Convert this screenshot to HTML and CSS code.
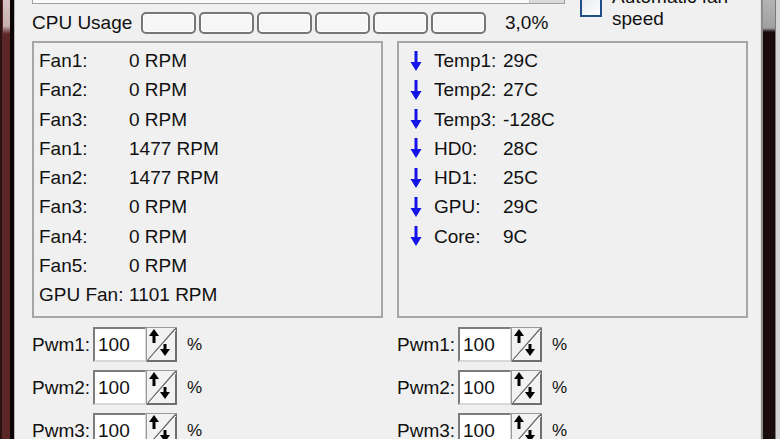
FILE: index.html
```html
<!DOCTYPE html>
<html lang="en">
<head>
  <meta charset="UTF-8" />
  <title>SpeedFan</title>
  <link rel="stylesheet" href="styles.css">
</head>
<body>
<div class="frame">
  <div class="edge-left"></div>
  <div class="window">
    <div class="header">
      <div class="header-main">
        <div class="top-strip"><div class="top-field"></div><div class="top-btn"></div></div>
        <div class="cpu-row">
          <span class="cpu-label">CPU Usage</span>
          <div class="cpu-bars">
            <div class="cpu-bar"></div>
            <div class="cpu-bar"></div>
            <div class="cpu-bar"></div>
            <div class="cpu-bar"></div>
            <div class="cpu-bar"></div>
            <div class="cpu-bar"></div>
          </div>
          <span class="cpu-value">3,0%</span>
        </div>
      </div>
      <div class="auto-speed">
        <div class="checkbox"></div>
        <div class="auto-label">Automatic fan speed</div>
      </div>
    </div>

    <div class="panels">
      <div class="panel fans">
        <div class="row"><span class="name">Fan1:</span><span>0 RPM</span></div>
        <div class="row"><span class="name">Fan2:</span><span>0 RPM</span></div>
        <div class="row"><span class="name">Fan3:</span><span>0 RPM</span></div>
        <div class="row"><span class="name">Fan1:</span><span>1477 RPM</span></div>
        <div class="row"><span class="name">Fan2:</span><span>1477 RPM</span></div>
        <div class="row"><span class="name">Fan3:</span><span>0 RPM</span></div>
        <div class="row"><span class="name">Fan4:</span><span>0 RPM</span></div>
        <div class="row"><span class="name">Fan5:</span><span>0 RPM</span></div>
        <div class="row"><span class="name">GPU Fan:</span><span>1101 RPM</span></div>
      </div>
      <div class="panel temps">
        <div class="row"><svg class="arrow" viewBox="0 0 12 20"><path d="M4.5 0h3v11h4l-5.5 9L0.5 11h4z"/></svg><span class="name">Temp1:</span><span>29C</span></div>
        <div class="row"><svg class="arrow" viewBox="0 0 12 20"><path d="M4.5 0h3v11h4l-5.5 9L0.5 11h4z"/></svg><span class="name">Temp2:</span><span>27C</span></div>
        <div class="row"><svg class="arrow" viewBox="0 0 12 20"><path d="M4.5 0h3v11h4l-5.5 9L0.5 11h4z"/></svg><span class="name">Temp3:</span><span>-128C</span></div>
        <div class="row"><svg class="arrow" viewBox="0 0 12 20"><path d="M4.5 0h3v11h4l-5.5 9L0.5 11h4z"/></svg><span class="name">HD0:</span><span>28C</span></div>
        <div class="row"><svg class="arrow" viewBox="0 0 12 20"><path d="M4.5 0h3v11h4l-5.5 9L0.5 11h4z"/></svg><span class="name">HD1:</span><span>25C</span></div>
        <div class="row"><svg class="arrow" viewBox="0 0 12 20"><path d="M4.5 0h3v11h4l-5.5 9L0.5 11h4z"/></svg><span class="name">GPU:</span><span>29C</span></div>
        <div class="row"><svg class="arrow" viewBox="0 0 12 20"><path d="M4.5 0h3v11h4l-5.5 9L0.5 11h4z"/></svg><span class="name">Core:</span><span>9C</span></div>
      </div>
    </div>

    <div class="pwm-grid">
      <div class="pwm-col">
        <div class="pwm-row"><span class="pwm-label">Pwm1:</span><div class="field">100</div><svg class="spin" viewBox="0 0 31 35"><rect x="0.5" y="0.5" width="30" height="34" fill="#f2f2f2" stroke="#9a9a9a"/><path d="M30 1v33H1" fill="none" stroke="#6e6e6e" stroke-width="2"/><path d="M2 33L29 2" stroke="#6e6e6e" stroke-width="1.5"/><path d="M3 33L30 3" stroke="#fff"/><path d="M8 2l5 7h-3.5v7h-3v-7H3z"/><path d="M19 29l5 -7h-3.5v-5h-3v5H14z"/></svg><span class="pct">%</span></div>
        <div class="pwm-row"><span class="pwm-label">Pwm2:</span><div class="field">100</div><svg class="spin" viewBox="0 0 31 35"><rect x="0.5" y="0.5" width="30" height="34" fill="#f2f2f2" stroke="#9a9a9a"/><path d="M30 1v33H1" fill="none" stroke="#6e6e6e" stroke-width="2"/><path d="M2 33L29 2" stroke="#6e6e6e" stroke-width="1.5"/><path d="M3 33L30 3" stroke="#fff"/><path d="M8 2l5 7h-3.5v7h-3v-7H3z"/><path d="M19 29l5 -7h-3.5v-5h-3v5H14z"/></svg><span class="pct">%</span></div>
        <div class="pwm-row"><span class="pwm-label">Pwm3:</span><div class="field">100</div><svg class="spin" viewBox="0 0 31 35"><rect x="0.5" y="0.5" width="30" height="34" fill="#f2f2f2" stroke="#9a9a9a"/><path d="M30 1v33H1" fill="none" stroke="#6e6e6e" stroke-width="2"/><path d="M2 33L29 2" stroke="#6e6e6e" stroke-width="1.5"/><path d="M3 33L30 3" stroke="#fff"/><path d="M8 2l5 7h-3.5v7h-3v-7H3z"/><path d="M19 29l5 -7h-3.5v-5h-3v5H14z"/></svg><span class="pct">%</span></div>
      </div>
      <div class="pwm-col">
        <div class="pwm-row"><span class="pwm-label">Pwm1:</span><div class="field">100</div><svg class="spin" viewBox="0 0 31 35"><rect x="0.5" y="0.5" width="30" height="34" fill="#f2f2f2" stroke="#9a9a9a"/><path d="M30 1v33H1" fill="none" stroke="#6e6e6e" stroke-width="2"/><path d="M2 33L29 2" stroke="#6e6e6e" stroke-width="1.5"/><path d="M3 33L30 3" stroke="#fff"/><path d="M8 2l5 7h-3.5v7h-3v-7H3z"/><path d="M19 29l5 -7h-3.5v-5h-3v5H14z"/></svg><span class="pct">%</span></div>
        <div class="pwm-row"><span class="pwm-label">Pwm2:</span><div class="field">100</div><svg class="spin" viewBox="0 0 31 35"><rect x="0.5" y="0.5" width="30" height="34" fill="#f2f2f2" stroke="#9a9a9a"/><path d="M30 1v33H1" fill="none" stroke="#6e6e6e" stroke-width="2"/><path d="M2 33L29 2" stroke="#6e6e6e" stroke-width="1.5"/><path d="M3 33L30 3" stroke="#fff"/><path d="M8 2l5 7h-3.5v7h-3v-7H3z"/><path d="M19 29l5 -7h-3.5v-5h-3v5H14z"/></svg><span class="pct">%</span></div>
        <div class="pwm-row"><span class="pwm-label">Pwm3:</span><div class="field">100</div><svg class="spin" viewBox="0 0 31 35"><rect x="0.5" y="0.5" width="30" height="34" fill="#f2f2f2" stroke="#9a9a9a"/><path d="M30 1v33H1" fill="none" stroke="#6e6e6e" stroke-width="2"/><path d="M2 33L29 2" stroke="#6e6e6e" stroke-width="1.5"/><path d="M3 33L30 3" stroke="#fff"/><path d="M8 2l5 7h-3.5v7h-3v-7H3z"/><path d="M19 29l5 -7h-3.5v-5h-3v5H14z"/></svg><span class="pct">%</span></div>
      </div>
    </div>
  </div>
  <div class="edge-right"></div>
</div>
</body>
</html>
```

FILE: styles.css
```css
body { margin:0; font-family:"Liberation Sans", Arial, sans-serif; font-size:19px; color:#111; background:#f0f0f0; overflow:hidden;}
.frame { display:flex; height:439px; overflow:hidden;}

.edge-left { width:16px; flex:none;
  background:
    linear-gradient(to bottom, #d6c4c4 0, #c8b0b0 26px, transparent 34px) 3px 0 / 7px 100% no-repeat,
    linear-gradient(to right, #2a1212 0 2px, #5a2626 2px 10px, #0a0404 10px 14px, #b8b8b8 14px 15px, #f0f0f0 15px);}
.edge-right { width:20px; flex:none;
  background:
    linear-gradient(to bottom, #b4b4b4 0, #a0a0a0 28px, #1a0c0c 32px) 3px 0 / 12px 100% no-repeat,
    linear-gradient(to right, #e4e4e4 0 1px, #8c8c8c 1px 3px, #120808 3px 15px, #7a7a7a 15px 16px, #d4d4d4 16px);}

.window { flex:1; padding:0 12px 0 16px; background:#f0f0f0;}

.header { display:flex; align-items:flex-start; height:34px;}
.header-main { width:533px; flex:none;}
.top-strip { display:flex; height:3px; border:1px solid #a0a0a0; border-top:none;}
.top-field { flex:1; background:#fbfbfb;}
.top-btn { width:34px; background:#dadada; border-left:1px solid #c4c4c4;}

.cpu-row { display:flex; align-items:center; height:22px; margin-top:8px;}
.cpu-label { width:109px; flex:none;}
.cpu-bars { display:flex; gap:3px;}
.cpu-bar { width:55px; height:22px; box-sizing:border-box; border:2px solid #767676; border-radius:5px; background:#f6f6f6; box-shadow:inset 0 0 0 1px #fff;}
.cpu-value { margin-left:19px;}

.auto-speed { display:flex; align-items:flex-start; margin-left:15px;}
.checkbox { width:22px; height:22px; box-sizing:border-box; margin-top:-5px; border:2px solid #1f4f86; background:linear-gradient(135deg, #e4e8ee, #ffffff);}
.auto-label { width:125px; margin-left:10px; margin-top:-14px; line-height:22px;}

.panels { display:grid; grid-template-columns:351px 351px; gap:14px; margin-top:7px; height:277px;}
.panel { box-sizing:border-box; border:2px solid #a6a6a6; background:#f0f0f0; padding-top:3px; line-height:29.25px;}
.row { display:flex; align-items:center; height:29.25px;}
.fans { padding-left:5px;}
.fans .name { width:90px;}
.temps { padding-left:11px;}
.arrow { width:12px; height:20px; fill:#1414e6; margin-right:12px; flex:none;}
.temps .name { width:69px;}

.pwm-grid { display:grid; grid-template-columns:351px 351px; gap:14px; margin-top:9px;}
.pwm-col { display:flex; flex-direction:column; gap:8px;}
.pwm-row { display:flex; align-items:center; height:35px;}
.pwm-label { width:61px; flex:none;}
.field { width:53px; height:35px; box-sizing:border-box; padding-left:3px; line-height:31px; background:#fff;
  border-top:2px solid #7c7c7c; border-left:2px solid #7c7c7c; border-bottom:2px solid #d8d8d8; border-right:1px solid #d8d8d8;}
.spin { width:31px; height:35px; flex:none;}
.pct { margin-left:10px; font-size:17px;}
```
